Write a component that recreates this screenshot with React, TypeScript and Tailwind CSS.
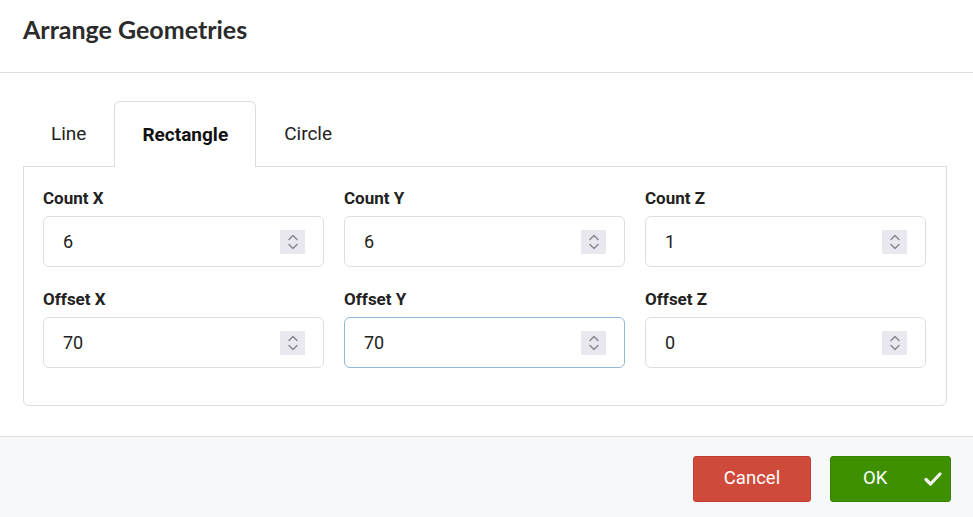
import React, { useState } from 'react';

const fields = [
  { label: 'Count X', value: '6' },
  { label: 'Count Y', value: '6' },
  { label: 'Count Z', value: '1' },
  { label: 'Offset X', value: '70' },
  { label: 'Offset Y', value: '70', focused: true },
  { label: 'Offset Z', value: '0' },
];

const Spinner: React.FC = () => (
  <div className="w-[25px] h-[24px] bg-[#e9e8ee] flex items-center justify-center">
    <svg width="12" height="18" viewBox="0 0 12 18" fill="none" stroke="#8c8b98" strokeWidth="1.6" strokeLinecap="round" strokeLinejoin="round">
      <path d="M2 6.5 6 2.5 10 6.5" />
      <path d="M2 11.5 6 15.5 10 11.5" />
    </svg>
  </div>
);

const App: React.FC = () => {
  const [tab, setTab] = useState('Rectangle');
  const tabs = ['Line', 'Rectangle', 'Circle'];

  return (
    <div className="w-[973px] h-[517px] bg-white flex flex-col font-['Roboto',sans-serif] text-[#222]">
      <div className="h-[73px] border-b border-[#dedede] flex items-center px-[23px] shrink-0">
        <h1 className="font-['Lato',sans-serif] font-bold text-[25px] text-[#2b2b2b] -mt-[13px]">Arrange Geometries</h1>
      </div>

      <div className="flex-1 pt-[28px] pb-[30px] pl-[23px] pr-[26px] flex flex-col">
        <div className="flex h-[65px] relative z-10">
          {tabs.map((t) => (
            <button
              key={t}
              onClick={() => setTab(t)}
              className={
                t === tab
                  ? 'px-[27px] pt-px h-[66px] bg-white border border-b-0 border-[#dcdcdc] rounded-t-[6px] text-[19px] font-bold text-[#111]'
                  : 'px-[27px] pt-px h-[65px] border border-transparent text-[19px] text-[#222]'
              }
            >
              {t}
            </button>
          ))}
        </div>
        <div className="h-[240px] border border-[#dcdcdc] rounded-b-[6px] pl-[19px] pr-[20px] pt-[21px]">
          <div className="grid grid-cols-3 gap-x-5 gap-y-[22px]">
            {fields.map((f) => (
              <div key={f.label} className="flex flex-col gap-2">
                <label className="text-[17px] leading-[20px] font-bold text-[#222]">{f.label}</label>
                <div
                  className={
                    'h-[51px] rounded-[6px] border flex items-center justify-between pl-[19px] pr-[18px] ' +
                    (f.focused ? 'border-[#8fb8dc]' : 'border-[#dedede]')
                  }
                >
                  <span className="text-[18px] text-[#222]">{f.value}</span>
                  <Spinner />
                </div>
              </div>
            ))}
          </div>
        </div>
      </div>

      <div className="h-[81px] border-t border-[#dedede] bg-[#f7f8fa] flex items-start justify-end gap-[19px] pt-[19px] pr-[22px] shrink-0">
        <button className="w-[118px] h-[46px] rounded-[3px] bg-[#cf4a3a] border border-[#bf3f31] text-white text-[18.5px]">
          Cancel
        </button>
        <button className="w-[121px] h-[46px] rounded-[3px] bg-[#3e9000] border border-[#388300] text-white text-[18.5px] flex items-center justify-between pl-[32px] pr-[7px]">
          <span>OK</span>
          <svg width="20" height="16" viewBox="0 0 20 16" fill="none" stroke="#f2f2f2" strokeWidth="3.2" strokeLinecap="round" strokeLinejoin="round">
            <path d="M3 8.5 7.5 13 17 3" />
          </svg>
        </button>
      </div>
    </div>
  );
};

export default App;
